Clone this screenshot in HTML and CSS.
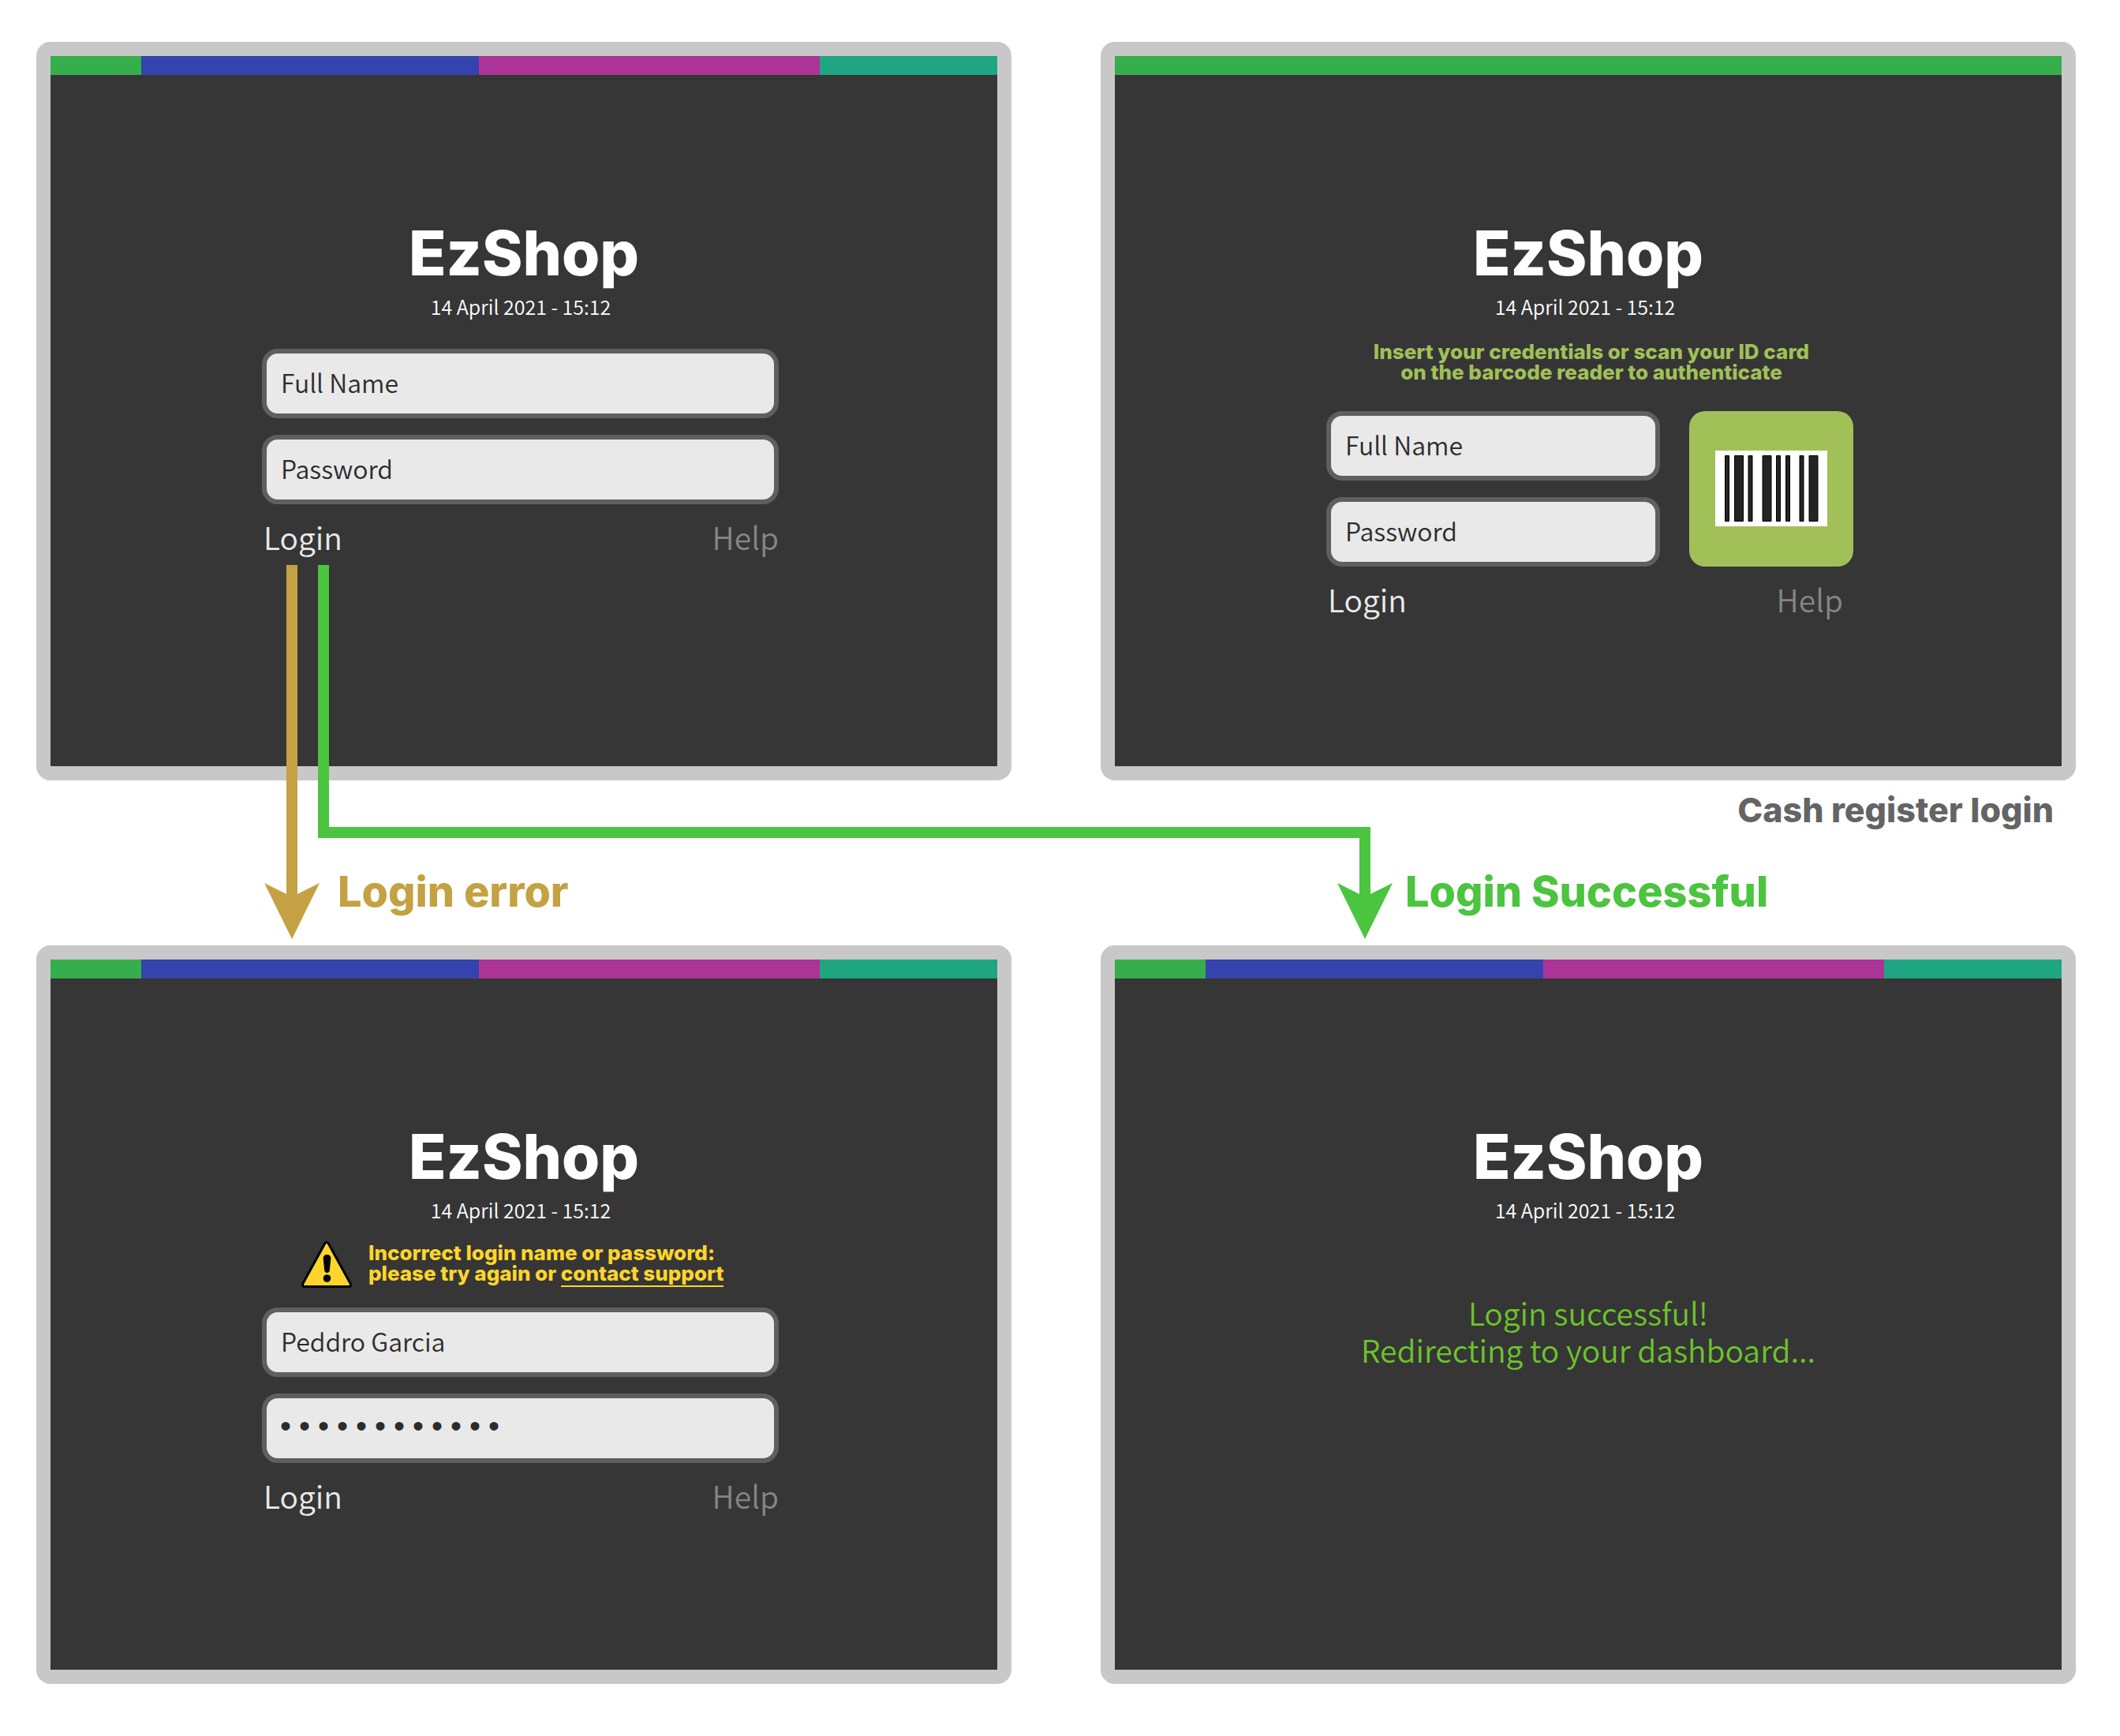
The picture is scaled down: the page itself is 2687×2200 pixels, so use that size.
FILE: index.html
```html
<!DOCTYPE html>
<html lang="en">
<head>
<meta charset="utf-8">
<title>EzShop login flow</title>
<link rel="stylesheet" href="styles.css">
</head>
<body>
<main class="board">
  <section class="screen">
    <div class="stripe"><i class="green"></i><i class="blue"></i><i class="magenta"></i><i class="teal"></i></div>
    <h1 class="brand">EzShop</h1>
    <p class="date">14 April 2021 - 15:12</p>
    <form class="form form-plain">
      <div class="fields">
        <input class="field" type="text" placeholder="Full Name" aria-label="Full Name">
        <input class="field" type="password" placeholder="Password" aria-label="Password">
      </div>
      <div class="actions"><button class="login" type="button">Login</button><a class="help" href="#help">Help</a></div>
    </form>
  </section>

  <section class="screen">
    <div class="stripe"><i class="green wide"></i></div>
    <h1 class="brand">EzShop</h1>
    <p class="date">14 April 2021 - 15:12</p>
    <p class="hint">Insert your credentials or scan your ID card<br>on the barcode reader to authenticate</p>
    <form class="form">
      <div class="scan-row">
        <div class="fields">
          <input class="field" type="text" placeholder="Full Name" aria-label="Full Name">
          <input class="field" type="password" placeholder="Password" aria-label="Password">
        </div>
        <div class="scan">
          <svg class="barcode" viewBox="0 0 142 96" role="img" aria-label="Barcode">
            <rect width="142" height="96" fill="#fff"/>
            <path fill="#242424" stroke="#000" d="M12.500 6.500h5v83h-5zM24.500 6.500h11v83h-11zM42 6.500h5v83h-5zM60 6.500h11v83h-11zM77.500 6.500h5v83h-5zM89.500 6.500h5v83h-5zM107 6.500h5v83h-5zM119 6.500h11v83h-11z"/>
          </svg>
        </div>
      </div>
      <div class="actions"><button class="login" type="button">Login</button><a class="help" href="#help">Help</a></div>
    </form>
  </section>

  <div class="between">
    <p class="flow-label error-label">Login error</p>
  </div>
  <div class="between">
    <p class="caption">Cash register login</p>
    <p class="flow-label success-label">Login Successful</p>
  </div>

  <section class="screen">
    <div class="stripe"><i class="green"></i><i class="blue"></i><i class="magenta"></i><i class="teal"></i></div>
    <h1 class="brand">EzShop</h1>
    <p class="date">14 April 2021 - 15:12</p>
    <div class="alert">
      <svg class="warning" viewBox="0 0 64 59" aria-hidden="true">
        <path d="M32 4 60 55H4z" fill="#000" stroke="#000" stroke-width="8" stroke-linejoin="round"/>
        <path d="M32 4 60 55H4z" fill="#ffd52b" stroke="#ffd52b" stroke-width="2" stroke-linejoin="round"/>
        <path d="M32.500 17c3 0 5 2 4.800 5l-1.500 15c-.3 4-6.300 4-6.600 0l-1.500-15c-.2-3 1.800-5 4.800-5z"/>
        <circle cx="32.500" cy="47" r="4.800"/>
      </svg>
      <p class="alert-text">Incorrect login name or password:<br>please try again or <a class="support" href="#support">contact support</a></p>
    </div>
    <form class="form">
      <div class="fields">
        <input class="field" type="text" value="Peddro Garcia" aria-label="Full Name">
        <input class="field filled" type="password" value="secretsecret" aria-label="Password">
      </div>
      <div class="actions"><button class="login" type="button">Login</button><a class="help" href="#help">Help</a></div>
    </form>
  </section>

  <section class="screen">
    <div class="stripe"><i class="green"></i><i class="blue"></i><i class="magenta"></i><i class="teal"></i></div>
    <h1 class="brand">EzShop</h1>
    <p class="date">14 April 2021 - 15:12</p>
    <p class="success">Login successful!<br>Redirecting to your dashboard...</p>
  </section>

  <div class="flows" aria-hidden="true">
    <div class="flow flow-error"></div>
    <div class="flow flow-success"></div>
    <div class="flow flow-drop"></div>
    <svg class="head head-error" viewBox="0 0 70 71"><path d="M0 0 28 14H42L70 0 35 71z"/></svg>
    <svg class="head head-success" viewBox="0 0 70 71"><path d="M0 0 28 14H42L70 0 35 71z"/></svg>
  </div>
</main>
</body>
</html>
```
FILE: styles.css
```css
:root {
  --ui: "Noto Sans CJK SC", "Noto Sans", sans-serif;
  --display: Inter, sans-serif;
  --gold: #c4a142;
  --go: #4bc43f;
  --half: calc((100% - 113px) / 4);
}
* { box-sizing: border-box; }
body { margin: 0; background: #fff; font-family: var(--ui); font-weight: 350; }
h1, p { margin: 0; }

.board {
  position: relative;
  display: grid;
  grid-template-columns: 1fr 1fr;
  column-gap: 113px;
  margin: 53px 56px 66px 46px;
}

.screen {
  min-height: 936px;
  border: 18px solid #c8c8c8;
  border-radius: 18px;
  background: #363636;
  color: #fff;
  text-align: center;
}
.stripe { display: grid; grid-template-columns: 115fr 428fr 432fr 225fr; height: 24px; }
.green { background: #37ae4c; }
.blue { background: #3543ae; }
.magenta { background: #ac3497; }
.teal { background: #1fa582; }
.wide { grid-column: 1 / -1; }

.brand {
  margin-top: 179px;
  font: 800 78px/94px var(--display);
}
.date { padding-right: 8px; font-size: 25px; line-height: 40px; }

.form { width: 655px; margin-left: calc(50% - 332px); text-align: left; }
.form-plain { margin-top: 34px; }
.fields { display: grid; gap: 21px; flex: 1; }
.field {
  width: 100%;
  height: 88px;
  padding: 0 18px 5px;
  border: 6px solid #5f5f5f;
  border-radius: 20px;
  background: #e9e9e9;
  color: #2c2c2c;
  font: inherit;
  font-size: 32px;
}
.field::placeholder { color: #2c2c2c; opacity: 1; }
.filled { padding: 0 12px; font: 40px "Liberation Mono", monospace; }
.actions { display: flex; justify-content: space-between; margin-top: 13px; padding-left: 2px; }
.login, .help { font: inherit; font-size: 39px; line-height: 56px; }
.login { padding: 0; border: 0; background: none; color: #eaeaea; }
.help { color: #858585; text-decoration: none; }

.hint {
  margin: 25px 0 36px;
  padding-left: 8px;
  color: #a1c058;
  font: 800 26px/26px var(--display);
}
.scan-row { display: flex; gap: 37px; margin-right: -13px; }
.scan {
  display: grid;
  place-items: center;
  width: 208px;
  padding-bottom: 2px;
  border-radius: 20px;
  background: #a1c058;
}
.barcode { width: 142px; height: 96px; }

.alert {
  display: flex;
  gap: 21px;
  margin: 20px 0 25px calc(50% - 282px);
}
.warning { width: 64px; height: 59px; }
.alert-text {
  padding-top: 2px;
  color: #ffd52b;
  font: 800 26px/26px var(--display);
  text-align: left;
}
.support { color: inherit; text-decoration: none; border-bottom: 2px solid; }

.success {
  margin-top: 87px;
  color: #6bc42b;
  font-size: 39px;
  line-height: 47px;
}

.between { display: flex; flex-direction: column; height: 209px; }
.flow-label { margin-top: auto; margin-bottom: 38px; font: 800 54px/60px var(--display); }
.error-label { padding-left: 382px; color: var(--gold); }
.success-label { padding-left: 386px; color: var(--go); }
.caption {
  padding: 12px 28px 0 0;
  color: #646464;
  font: 800 43px/50px var(--display);
  text-align: right;
}

/* Arrows that run from the first Login button over the screens */
.flows { position: absolute; inset: 0; pointer-events: none; }
.flow { position: absolute; }
.flow-error {
  left: calc(var(--half) - 301px);
  top: 663px;
  width: 14px;
  height: 420px;
  background: var(--gold);
}
.flow-success {
  left: calc(var(--half) - 261px);
  right: calc(var(--half) + 276px);
  top: 663px;
  height: 346px;
  border: solid var(--go);
  border-width: 0 0 14px 14px;
}
.flow-drop {
  right: calc(var(--half) + 276px);
  top: 995px;
  width: 14px;
  height: 88px;
  background: var(--go);
}
.head { position: absolute; top: 1066px; width: 70px; height: 71px; }
.head-error { left: calc(var(--half) - 329px); fill: var(--gold); }
.head-success { right: calc(var(--half) + 248px); fill: var(--go); }
```
